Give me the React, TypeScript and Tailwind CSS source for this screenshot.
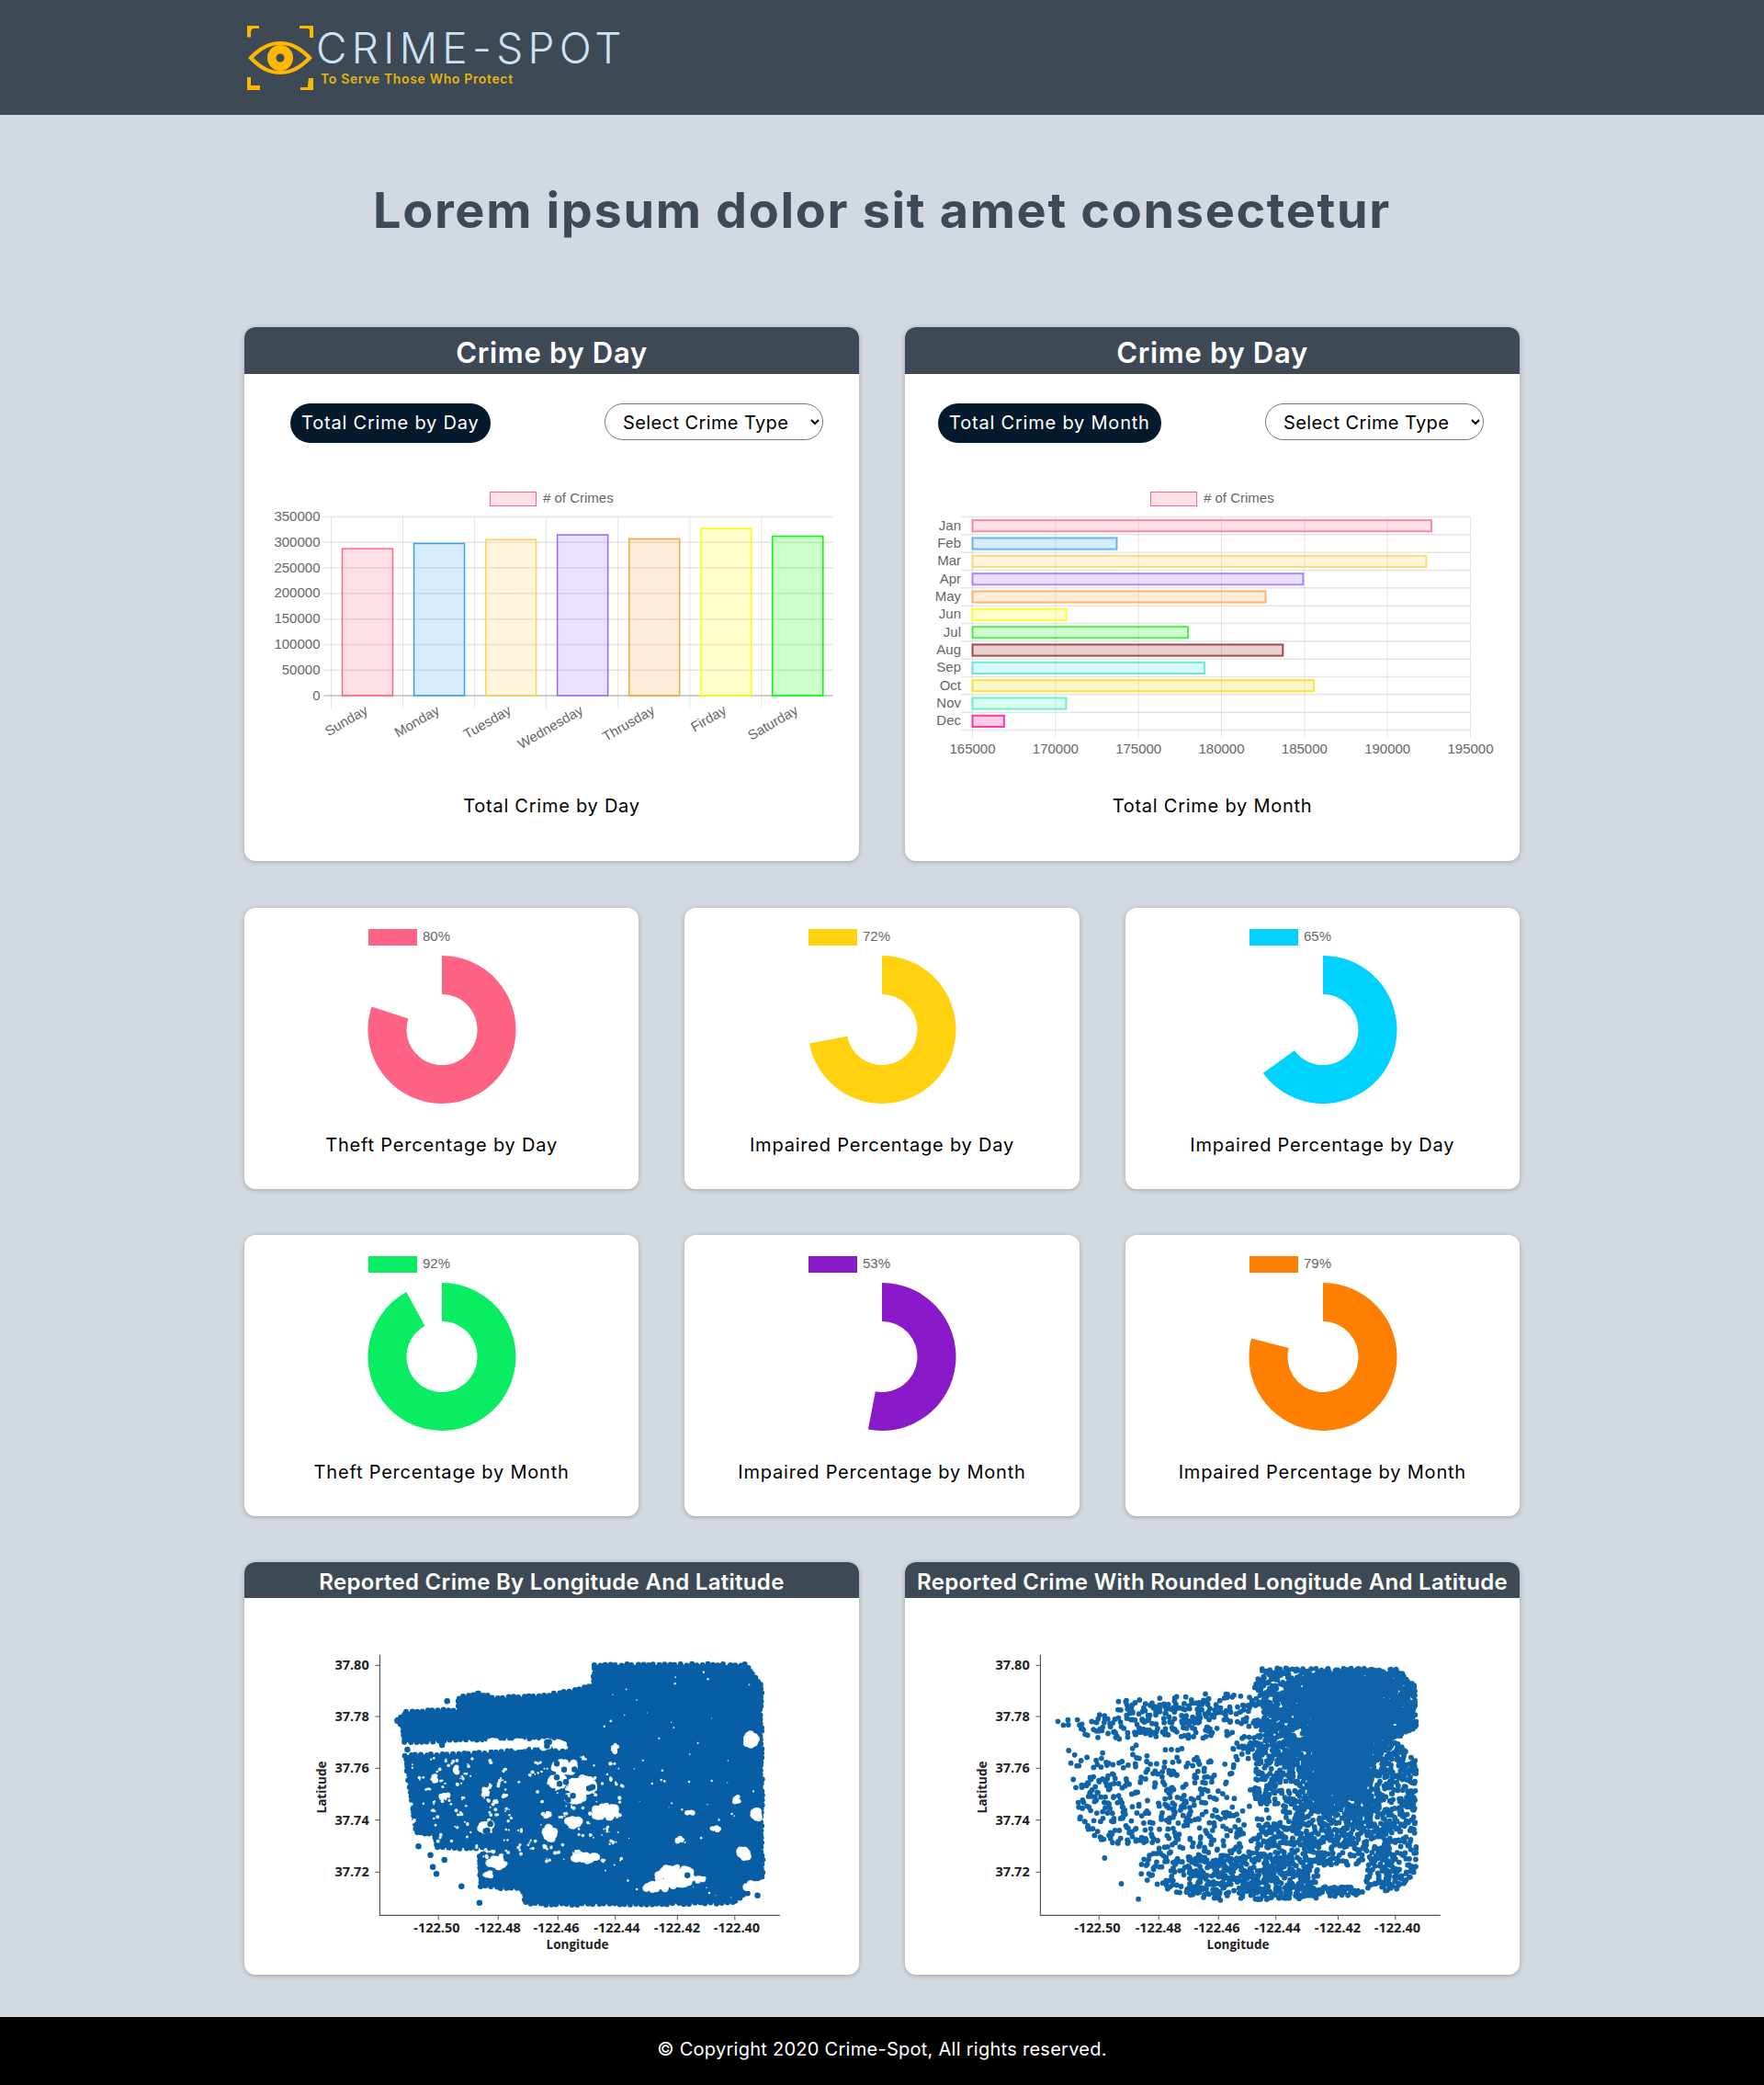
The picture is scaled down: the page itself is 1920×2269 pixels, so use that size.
import React from "react";

const sans = "font-['Inter',sans-serif]";
const BLUE = "#085ea5";

function seeded(seed: number) {
  let a = seed;
  return () => {
    a |= 0;
    a = (a + 0x6d2b79f5) | 0;
    let t = Math.imul(a ^ (a >>> 15), 1 | a);
    t = (t + Math.imul(t ^ (t >>> 7), 61 | t)) ^ t;
    return ((t ^ (t >>> 14)) >>> 0) / 4294967296;
  };
}

// scatter shapes were read off the zoomed crop, these bring them back to card pixels
const sx = (z: number) => (z - 14) / 2.306;
const sy = (z: number) => (z - 147) / 3;

// lots of round dots as one path, zero-length segments with round caps
const dotPath = (list: [number, number][]) => list.map(([x, y]) => `M${sx(x).toFixed(1)} ${sy(y).toFixed(1)}h.01`).join("");

function Logo() {
  return (
    <div className="flex items-start">
      <svg width="72" height="71" viewBox="0 0 72 71" className="mt-[28px] ml-[3px]">
        <g fill="#ffb800">
          <path d="M0 0h13v3H6l-2 3v6.500H0z" />
          <path d="M72 0v13h-4V4l-2 -1h-9V0z" />
          <path d="M0 56h4v9h10v5H0z" />
          <path d="M72 70H58v-3h8v-2l1-8h5z" />
          <path fillRule="evenodd" d="M1 35C13 22 24 17 36 17s23 5 35 18C59 48 48 53 36 53S13 48 1 35zM7 35c10 10 19 14 29 14s19-4 29-14C55 25 46 21 36 21S17 25 7 35z" />
          <circle cx="36" cy="35" r="14" />
        </g>
        <circle cx="36" cy="35" r="4.500" fill="#3d4a56" />
      </svg>
      <div className="ml-[3px] flex flex-col">
        <div className="mt-[25px] h-[54px] text-[46px] leading-[54px] font-light text-[#cfe2f3] tracking-[5.300px] whitespace-nowrap">CRIME-SPOT</div>
        <div className="ml-[5px] -mt-[3px] text-[14px] leading-[20px] font-semibold text-[#e6b30f] tracking-[0.65px] whitespace-nowrap">To Serve Those Who Protect</div>
      </div>
    </div>
  );
}

const gridLine = "rgba(0,0,0,0.1)";
const barColors = ["255,99,132", "54,162,235", "255,206,86", "153,102,255", "255,159,64", "255,255,0", "0,255,0"];

function Legend() {
  return (
    <g>
      <rect x="267.500" y="25.500" width="50" height="15" fill="rgba(255,99,132,0.2)" stroke="rgb(255,99,132)" />
      <text x="325" y="37" fontSize="15" fill="#666">
        # of Crimes
      </text>
    </g>
  );
}

function DayChart() {
  const days = [
    ["Sunday", 287700],
    ["Monday", 297900],
    ["Tuesday", 305300],
    ["Wednesday", 314800],
    ["Thrusday", 306700],
    ["Firday", 327000],
    ["Saturday", 312100],
  ] as const;
  const left = 94.5;
  const right = 641;
  const top = 52.5;
  const zero = 247;
  const step = 78.05;
  const ticks = [350000, 300000, 250000, 200000, 150000, 100000, 50000, 0];
  return (
    <svg width="669" height="320" viewBox="0 0 669 320" className="font-['Liberation_Sans',Arial,sans-serif] block">
      <Legend />
      {ticks.map((t) => {
        const y = zero - (t / 350000) * (zero - top);
        return (
          <g key={t}>
            <line x1={left - 8} x2={right} y1={y} y2={y} stroke={t === 0 ? "rgba(0,0,0,0.25)" : gridLine} strokeWidth="1.500" />
            <text x={82.5} y={y + 4.5} textAnchor="end" fontSize="15" fill="#666">
              {t}
            </text>
          </g>
        );
      })}
      {days.map((d, i) => {
        const x = left + i * step;
        const y = zero - (d[1] / 350000) * (zero - top);
        const c = barColors[i];
        return (
          <g key={d[0]}>
            <line x1={x} x2={x} y1={top} y2={zero + 14} stroke={gridLine} />
            <rect x={x + 12} y={y} width={55} height={zero - y} fill={`rgba(${c},0.2)`} stroke={`rgb(${c})`} strokeWidth="1.500" />
            <text transform={`translate(${x + 41} 266) rotate(-30)`} textAnchor="end" fontSize="15" fill="#666">
              {d[0]}
            </text>
          </g>
        );
      })}
    </svg>
  );
}

function MonthChart() {
  const months = [
    ["Jan", 192650, "255,99,132"],
    ["Feb", 173690, "54,162,235"],
    ["Mar", 192340, "255,206,86"],
    ["Apr", 184920, "153,102,255"],
    ["May", 182660, "255,159,64"],
    ["Jun", 170660, "255,255,0"],
    ["Jul", 177980, "20,240,20"],
    ["Aug", 183700, "139,20,20"],
    ["Sep", 178970, "64,224,208"],
    ["Oct", 185570, "255,215,0"],
    ["Nov", 170640, "64,240,180"],
    ["Dec", 166900, "255,0,128"],
  ] as const;
  const left = 73.5;
  const right = 615.5;
  const top = 52.5;
  const bottom = 284.5;
  const rowH = (bottom - top) / 12;
  const xOf = (v: number) => left + ((v - 165000) / 30000) * (right - left);
  const ticks = [165000, 170000, 175000, 180000, 185000, 190000, 195000];
  return (
    <svg width="669" height="320" viewBox="0 0 669 320" className="font-['Liberation_Sans',Arial,sans-serif] block">
      <Legend />
      {months.map((m, i) => (
        <line key={m[0]} x1={61} x2={right} y1={top + i * rowH} y2={top + i * rowH} stroke={gridLine} strokeWidth="1.500" />
      ))}
      <line x1={61} x2={right} y1={bottom} y2={bottom} stroke={gridLine} strokeWidth="1.500" />
      {ticks.map((t) => (
        <g key={t}>
          <line x1={xOf(t)} x2={xOf(t)} y1={top} y2={bottom + 8} stroke={gridLine} />
          <text x={xOf(t)} y={310} textAnchor="middle" fontSize="15" fill="#666">
            {t}
          </text>
        </g>
      ))}
      {months.map((m, i) => {
        const y = top + i * rowH + 3.6;
        return (
          <g key={m[0]}>
            <rect x={left} y={y} width={xOf(m[1]) - left} height={12.2} fill={`rgba(${m[2]},0.2)`} stroke={`rgb(${m[2]})`} strokeOpacity="0.75" strokeWidth="2" />
            <text x={61} y={top + i * rowH + 14} textAnchor="end" fontSize="15" fill="#666">
              {m[0]}
            </text>
          </g>
        );
      })}
    </svg>
  );
}

function Donut({ pct, color }: { pct: number; color: string }) {
  const cx = 215;
  const cy = 132.5;
  const R = 80.5;
  const r = 38.5;
  const a = (pct / 100) * Math.PI * 2;
  const large = pct > 50 ? 1 : 0;
  const px = (rad: number) => cx + rad * Math.sin(a);
  const py = (rad: number) => cy - rad * Math.cos(a);
  const d = `M${cx} ${cy - R}A${R} ${R} 0 ${large} 1 ${px(R)} ${py(R)}L${px(r)} ${py(r)}A${r} ${r} 0 ${large} 0 ${cx} ${cy - r}Z`;
  return (
    <svg width="429" height="225" viewBox="0 0 429 225" className="font-['Liberation_Sans',Arial,sans-serif] block">
      <rect x="135" y="23" width="53" height="18" fill={color} />
      <text x="194" y="36" fontSize="15" fill="#666">
        {pct}%
      </text>
      <path d={d} fill={color} />
    </svg>
  );
}

const denseOutline: [number, number][] = [
  [398, 545], [422, 518], [552, 512], [552, 473], [600, 460], [650, 474], [780, 464], [892, 432], [892, 365], [1272, 365], [1310, 430], [1313, 1058], [1298, 1068], [1255, 1085], [1278, 1110], [1238, 1142], [1050, 1146], [770, 1147], [722, 1142], [712, 1098], [607, 1088], [605, 990], [640, 963], [500, 963], [490, 918], [447, 913], [418, 660], [590, 655], [770, 640], [838, 650], [825, 602], [780, 602], [640, 607], [418, 618], [410, 570],
];

// x, y, rx, ry, and whether dots come back on top of the hole
const denseHoles: [number, number, number, number, boolean][] = [
  [820, 700, 30, 18, true], [800, 745, 22, 20, true], [860, 760, 32, 26, true], [840, 800, 24, 10, true], [920, 845, 30, 22, false], [1095, 1055, 44, 32, false], [1155, 1065, 14, 8, false], [1045, 1090, 28, 12, false], [1265, 985, 14, 18, false], [870, 995, 32, 10, false], [650, 1010, 22, 14, false], [1285, 610, 14, 20, false], [945, 640, 8, 14, false], [1250, 805, 8, 10, false], [620, 895, 18, 14, true], [780, 915, 14, 20, false], [840, 880, 16, 14, false], [515, 795, 13, 8, false], [620, 780, 10, 12, false], [770, 855, 12, 8, false], [490, 735, 7, 12, false], [545, 710, 5, 12, false], [1300, 850, 8, 18, false], [1130, 848, 12, 3, false], [1195, 900, 14, 4, false], [1105, 935, 12, 6, false], [1295, 1090, 22, 14, false], [630, 1050, 14, 8, false], [640, 622, 16, 10, false], [700, 625, 20, 10, false], [770, 625, 12, 12, true],
];

function Axes() {
  const ys: [number, string][] = [[367, "37.80"], [534, "37.78"], [703, "37.76"], [872, "37.74"], [1042, "37.72"]];
  const xs: [number, number, string][] = [[501, 497, "-122.50"], [651, 650, "-122.48"], [801, 797, "-122.46"], [945, 949, "-122.44"], [1101, 1100, "-122.42"], [1245, 1250, "-122.40"]];
  return (
    <g className="font-['Open_Sans',sans-serif]" fontWeight="700" fill="#222">
      <path d={`M${sx(354)} ${sy(332)}V${sy(1183)}H${sx(1358)}`} fill="none" stroke="#555" strokeWidth="1.200" />
      {ys.map(([z, t]) => (
        <g key={t}>
          <line x1={sx(354) - 5} x2={sx(354)} y1={sy(z)} y2={sy(z)} stroke="#555" />
          <text x={sx(327)} y={sy(z) + 5} textAnchor="end" fontSize="14.500">
            {t}
          </text>
        </g>
      ))}
      {xs.map(([z, tz, t]) => (
        <g key={t}>
          <line x1={sx(z)} x2={sx(z)} y1={sy(1183)} y2={sy(1183) + 5} stroke="#555" />
          <text x={sx(tz)} y={sy(1225) + 5} textAnchor="middle" fontSize="14.500">
            {t}
          </text>
        </g>
      ))}
      <text x={sx(850)} y={sy(1278) + 5} textAnchor="middle" fontSize="13.500">
        Longitude
      </text>
      <text transform={`translate(${sx(208) + 5} ${sy(765)}) rotate(-90)`} textAnchor="middle" fontSize="13.500">
        Latitude
      </text>
    </g>
  );
}

function DenseScatter() {
  const rnd = seeded(11);
  const pts = denseOutline.map(([x, y]) => `${sx(x)},${sy(y)}`).join(" ");
  // scallop the outline with dots so it doesn't read as a clean polygon
  const edge: [number, number][] = [];
  denseOutline.forEach(([x, y], i) => {
    const [nx, ny] = denseOutline[(i + 1) % denseOutline.length];
    const n = Math.ceil(Math.hypot(nx - x, ny - y) / 14);
    for (let k = 0; k < n; k++) {
      edge.push([x + ((nx - x) * k) / n + (rnd() - 0.5) * 5, y + ((ny - y) * k) / n + (rnd() - 0.5) * 5]);
    }
  });
  // holes: clusters of little white blobs, a few dots go back on top of the busy ones
  const white: [number, number, number][] = [];
  const refill: [number, number][] = [];
  denseHoles.forEach(([x, y, rx, ry, busy]) => {
    const n = Math.ceil((rx * ry) / 14) + 6;
    const base = rx * ry > 120 ? 2.4 : 1;
    for (let k = 0; k < n; k++) {
      const t = rnd() * Math.PI * 2;
      const d = Math.sqrt(rnd());
      white.push([x + Math.cos(t) * d * rx, y + Math.sin(t) * d * ry, base + rnd() * 2]);
    }
    if (!busy) return;
    for (let k = 0; k < 3; k++) {
      const t = rnd() * Math.PI * 2;
      const d = Math.sqrt(rnd());
      refill.push([x + Math.cos(t) * d * rx, y + Math.sin(t) * d * ry]);
    }
  });
  for (let i = 0; i < 170; i++) {
    const cx = 430 + rnd() * 530;
    const cy = 670 + rnd() * 340;
    const n = 1 + Math.floor(rnd() * 3);
    for (let k = 0; k < n; k++) {
      white.push([cx + (rnd() - 0.5) * 12, cy + (rnd() - 0.5) * 12, 0.8 + rnd() * 1.3]);
    }
  }
  for (let i = 0; i < 55; i++) {
    white.push([900 + rnd() * 400, 380 + rnd() * 760, 0.5 + rnd() * 0.9]);
  }
  const outliers: [number, number][] = [[423, 642], [510, 627], [451, 958], [481, 986], [516, 1002], [487, 1025], [496, 1048], [559, 1088], [604, 1142], [600, 459], [523, 484], [1302, 1118], [820, 606], [1126, 1052], [398, 548]];
  return (
    <svg width="669" height="410" viewBox="0 0 669 410" className="block">
      <polygon points={pts} fill={BLUE} />
      <path d={dotPath(edge)} stroke={BLUE} strokeWidth="6" strokeLinecap="round" fill="none" />
      {white.map(([x, y, r], i) => (
        <circle key={i} cx={sx(x)} cy={sy(y)} r={r} fill="#fff" opacity="0.9" />
      ))}
      <path d={dotPath(refill.concat(outliers))} stroke={BLUE} strokeWidth="6.500" strokeLinecap="round" fill="none" />
      <Axes />
    </svg>
  );
}

function inside(x: number, y: number, poly: [number, number][]) {
  let hit = false;
  for (let i = 0, j = poly.length - 1; i < poly.length; j = i++) {
    const [xi, yi] = poly[i];
    const [xj, yj] = poly[j];
    if (yi > y !== yj > y && x < ((xj - xi) * (y - yi)) / (yj - yi) + xi) hit = !hit;
  }
  return hit;
}

const sparseOutline: [number, number][] = [
  [405, 560], [425, 535], [540, 525], [550, 482], [610, 475], [790, 458], [885, 445], [900, 375], [1250, 375], [1295, 440], [1295, 570], [1240, 610], [1295, 680], [1295, 1045], [1240, 1105], [1050, 1128], [770, 1135], [720, 1120], [605, 1075], [605, 1000], [640, 960], [495, 945], [450, 890], [420, 660], [420, 600],
];

function density(x: number, y: number) {
  if (x > 1040 && x < 1290 && y > 380 && y < 600) return 0.8;
  if (x > 900 && x < 1050 && y > 440 && y < 690) return 0.55;
  if (x < 830 && y > 605 && y < 665) return 0.012;
  if (x > 800 && x < 890 && y > 680 && y < 840) return 0.05;
  if (x > 1050 && x < 1170 && y > 1020 && y < 1090) return 0;
  if (x > 860 && x < 960 && y > 820 && y < 880) return 0.02;
  if (x > 720 && x < 1060 && y > 985 && y < 1120) return 0.5;
  if (x > 1050 && y > 1090) return 0.55;
  if (x > 1060) return 0.42;
  if (x > 890) return 0.38;
  if (x < 800 && y > 480 && y < 600) return 0.24;
  return 0.14;
}

function gauss(rnd: () => number) {
  return Math.sqrt(-2 * Math.log(1 - rnd())) * Math.cos(2 * Math.PI * rnd());
}

function SparseScatter() {
  const rnd = seeded(7);
  const dots: [number, number][] = [];
  for (let i = 0; i < 16000; i++) {
    const x = 395 + rnd() * 905;
    const y = 372 + rnd() * 765;
    if (!inside(x, y, sparseOutline)) continue;
    if (rnd() < density(x, y)) dots.push([x + 2, y]);
  }
  // the downtown core is practically solid, fading out at its edges
  for (let i = 0; i < 2600; i++) {
    const lobe = rnd() < 0.55;
    const x = lobe ? 1100 + gauss(rnd) * 42 : 1130 + gauss(rnd) * 75;
    const y = lobe ? 660 + gauss(rnd) * 85 : 500 + gauss(rnd) * 60;
    if (inside(x, y, sparseOutline)) dots.push([x, y]);
  }
  const extras: [number, number][] = [[398, 550], [425, 645], [515, 996], [557, 1080], [600, 1130], [550, 485], [1290, 820]];
  return (
    <svg width="669" height="410" viewBox="0 0 669 410" className="block">
      <path d={dotPath(dots.concat(extras))} stroke="#0f63a8" strokeWidth="5.800" strokeLinecap="round" fill="none" />
      <Axes />
    </svg>
  );
}

function TopCard({ pill, pad, caption, children }: { pill: string; pad: string; caption: string; children: React.ReactNode }) {
  return (
    <div className="rounded-xl bg-white shadow-[0_1px_5px_rgba(0,0,0,0.25)] overflow-hidden">
      <div className="h-[51px] bg-[#3d4a56] text-center text-[31px] leading-[56px] font-semibold text-white tracking-[0.7px]">Crime by Day</div>
      <div className={`${pad} pr-[39px] pt-[32px] flex items-start justify-between`}>
        <div className="h-[43px] rounded-full bg-[#04192b] px-[12px] text-[20px] leading-[43px] text-white tracking-[0.8px]">{pill}</div>
        <select className="h-[40px] w-[238px] rounded-full border border-[#767676] bg-white pl-[15px] pr-[6px] pt-px text-[20px] text-black tracking-[0.4px]">
          <option>Select Crime Type</option>
        </select>
      </div>
      <div className="mt-[28px]">{children}</div>
      <div className="mt-[35px] pb-[48px] text-center text-[20px] leading-[24px] text-black tracking-[0.75px]">{caption}</div>
    </div>
  );
}

function DonutCard({ pct, color, caption }: { pct: number; color: string; caption: string }) {
  return (
    <div className="rounded-xl bg-white shadow-[0_1px_5px_rgba(0,0,0,0.25)] flex flex-col items-center">
      <Donut pct={pct} color={color} />
      <div className="mt-[21px] pb-[36px] text-[20px] leading-[24px] text-black tracking-[0.8px]">{caption}</div>
    </div>
  );
}

function MapCard({ title, children }: { title: string; children: React.ReactNode }) {
  return (
    <div className="rounded-xl bg-white shadow-[0_1px_5px_rgba(0,0,0,0.25)] overflow-hidden">
      <div className="h-[39px] bg-[#3d4a56] text-center text-[24px] leading-[44px] font-semibold text-white whitespace-nowrap tracking-[0.3px]">{title}</div>
      {children}
    </div>
  );
}

export default function App() {
  return (
    <div className={`${sans} min-h-[2269px] bg-[#d3d9e0] flex flex-col`}>
      <header className="h-[125px] bg-[#3d4a56]">
        <div className="mx-auto w-[1388px]">
          <Logo />
        </div>
      </header>
      <main className="mx-auto w-[1388px] flex-1">
        <h1 className="pt-[72px] h-[231px] text-center text-[54px] leading-[64px] font-bold text-[#3d4a56] tracking-[1.65px] whitespace-nowrap">Lorem ipsum dolor sit amet consectetur</h1>
        <div className="flex flex-col gap-[50px]">
          <div className="grid grid-cols-2 gap-[50px] mb-px">
            <TopCard pill="Total Crime by Day" pad="pl-[50px]" caption="Total Crime by Day">
              <DayChart />
            </TopCard>
            <TopCard pill="Total Crime by Month" pad="pl-[36px]" caption="Total Crime by Month">
              <MonthChart />
            </TopCard>
          </div>
          <div className="grid grid-cols-3 gap-[50px]">
            <DonutCard pct={80} color="#ff6384" caption="Theft Percentage by Day" />
            <DonutCard pct={72} color="#ffd10f" caption="Impaired Percentage by Day" />
            <DonutCard pct={65} color="#00d2ff" caption="Impaired Percentage by Day" />
            <DonutCard pct={92} color="#0aed62" caption="Theft Percentage by Month" />
            <DonutCard pct={53} color="#8a1ac9" caption="Impaired Percentage by Month" />
            <DonutCard pct={79} color="#ff8000" caption="Impaired Percentage by Month" />
          </div>
          <div className="grid grid-cols-2 gap-[50px]">
            <MapCard title="Reported Crime By Longitude And Latitude">
              <DenseScatter />
            </MapCard>
            <MapCard title="Reported Crime With Rounded Longitude And Latitude">
              <SparseScatter />
            </MapCard>
          </div>
        </div>
      </main>
      <footer className="h-[74px] bg-black text-center text-[20px] leading-[70px] text-white tracking-[0.27px]">© Copyright 2020 Crime-Spot, All rights reserved.</footer>
    </div>
  );
}
